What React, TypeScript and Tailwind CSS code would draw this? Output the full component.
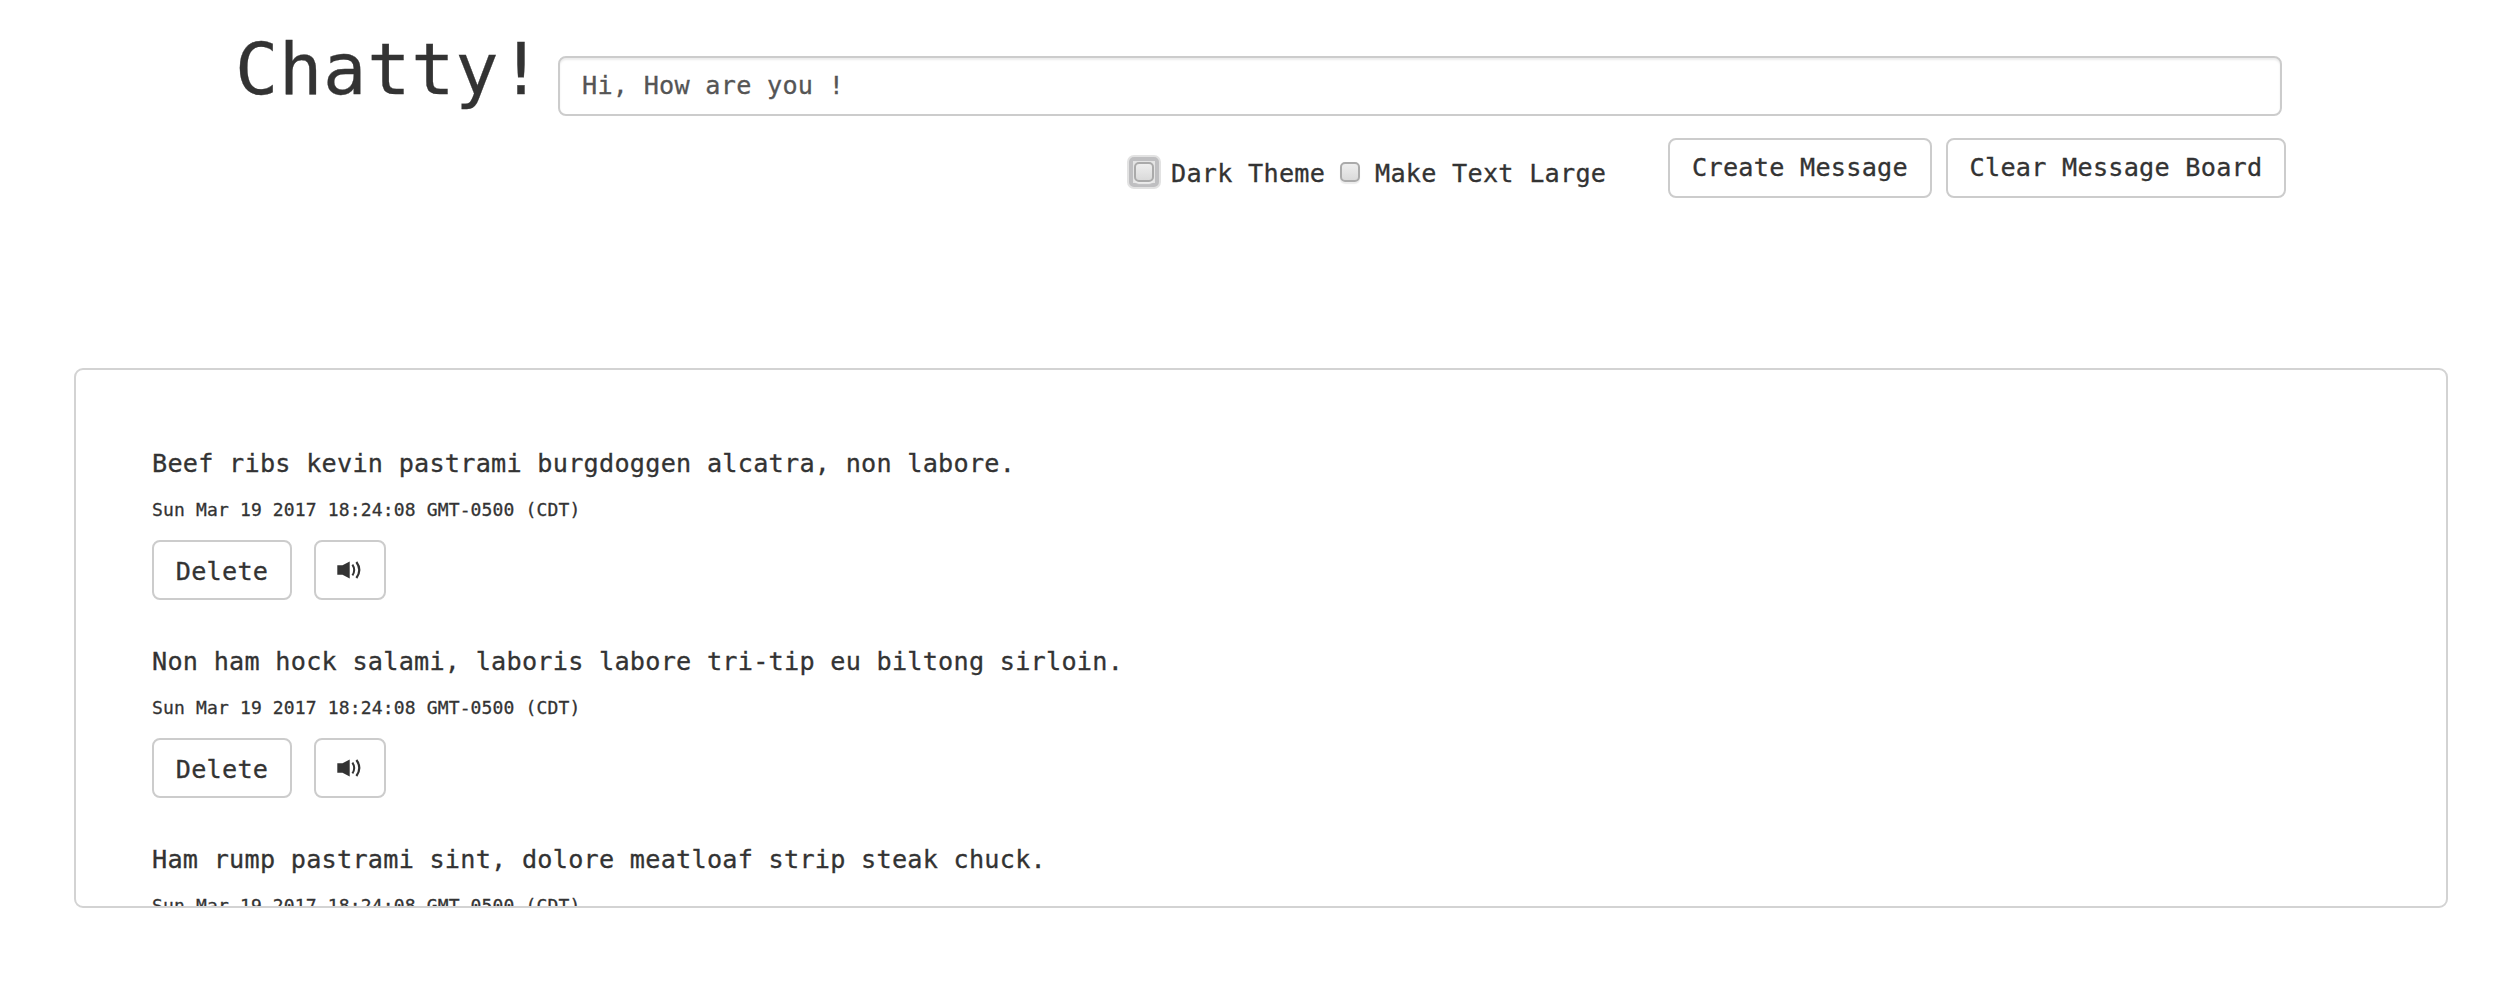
const messages = [
  "Beef ribs kevin pastrami burgdoggen alcatra, non labore.",
  "Non ham hock salami, laboris labore tri-tip eu biltong sirloin.",
  "Ham rump pastrami sint, dolore meatloaf strip steak chuck.",
];

function VolumeIcon() {
  return (
    <svg width="24" height="18" viewBox="0 0 24 18" fill="none" className="mr-0.5 block">
      <path d="M0.3 4.3h5.2L12.7 0.6v16.8L5.5 13.7H0.3z" fill="#333" />
      <path d="M15.4 3.6q3.6 5.4 0 10.8" stroke="#333" strokeWidth="2" />
      <path d="M19.4 1q5.8 8 0 16" stroke="#333" strokeWidth="2.2" />
    </svg>
  );
}

function Box() {
  return (
    <span className="block size-5 rounded-[5px] border-2 border-[#aaa] bg-linear-to-b from-[#eee] to-[#dadada] shadow-[0_2px_1px_#ececec]" />
  );
}

function FocusedBox() {
  return (
    <span className="-mx-[7px] block size-[34px] rounded-[7px] border-2 border-[#e2e2e2] bg-[#bfbfc1] p-[4px]">
      <span className="flex size-[22px] items-center justify-center bg-[#e4e4e4]">
        <Box />
      </span>
    </span>
  );
}

export default function App() {
  return (
    <div className="h-[982px] w-[2508px] overflow-hidden bg-white font-['DejaVu_Sans_Mono',monospace] text-[25.2px] leading-9 tracking-[0.25px] whitespace-nowrap text-[#333] [-webkit-text-stroke:0.3px]">
      <header className="flex h-[368px] flex-col pt-14 pl-[235px]">
        <div className="flex h-[60px]">
          <h1 className="-mt-[27px] w-[323px] text-[72px] leading-[80px] tracking-[0.7px]">Chatty!</h1>
          <input
            defaultValue="Hi, How are you !"
            className="h-[60px] w-[1724px] rounded-lg border-2 border-[#ccc] pr-[22px] pb-px pl-[22px] tracking-[0.25px] text-[#555] shadow-[inset_0_2px_2px_rgba(0,0,0,0.075)] outline-none"
          />
        </div>
        <div className="mt-[22px] flex pl-[899px]">
          <label className="flex h-[68px] items-center">
            <FocusedBox />
            <span className="ml-[17px] w-[169px] pt-[3px]">Dark Theme</span>
          </label>
          <label className="flex h-[68px] items-center">
            <Box />
            <span className="ml-[15px] w-[293px] pt-[3px]">Make Text Large</span>
          </label>
          <button className="h-[60px] w-[264px] rounded-lg border-2 border-[#ccc] pb-px">Create Message</button>
          <button className="ml-3.5 h-[60px] w-[340px] rounded-lg border-2 border-[#ccc] pb-px">
            Clear Message Board
          </button>
        </div>
      </header>
      <main className="ml-[74px] h-[540px] w-[2374px] overflow-hidden rounded-[9px] border-2 border-[#d3d3d3] pt-[76px] pl-[76px]">
        {messages.map((text) => (
          <article key={text} className="h-[198px]">
            <p>{text}</p>
            <p className="mt-3 text-[18px] leading-8 tracking-[0.15px]">Sun Mar 19 2017 18:24:08 GMT-0500 (CDT)</p>
            <div className="mt-3.5 flex gap-[22px]">
              <button className="h-[60px] w-[140px] rounded-lg border-2 border-[#ccc] pt-[3px]">Delete</button>
              <button className="flex h-[60px] w-[72px] items-center justify-center rounded-lg border-2 border-[#ccc]">
                <VolumeIcon />
              </button>
            </div>
          </article>
        ))}
      </main>
    </div>
  );
}
